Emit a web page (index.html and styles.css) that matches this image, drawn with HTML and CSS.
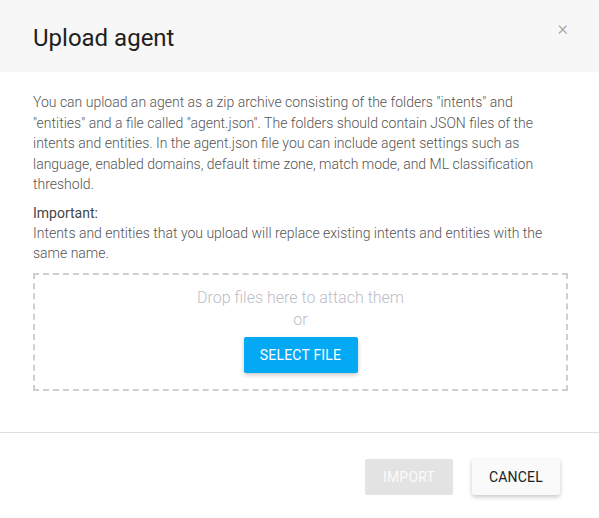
FILE: index.html
```html
<html lang="en">
<head>
  <link rel="stylesheet" href="styles.css">
</head>
<body>
  <div class="dialogo">
    <div class="cabecera">
      <h1 class="titulo">Upload agent</h1>
      <span class="cerrar">&#215;</span>
    </div>
    <div class="cuerpo">
      <p class="texto">You can upload an agent as a zip archive consisting of the folders "intents" and "entities" and a file called "agent.json". The folders should contain JSON files of the intents and entities. In the agent.json file you can include agent settings such as language, enabled domains, default time zone, match mode, and ML classification threshold.</p>
      <div class="importante">Important:</div>
      <p class="texto">Intents and entities that you upload will replace existing intents and entities with the same name.</p>
      <div class="zona">
        <div class="zona-texto">Drop files here to attach them</div>
        <div class="zona-texto">or</div>
        <button class="boton azul">Select file</button>
      </div>
    </div>
    <div class="pie">
      <button class="boton apagado">Import</button>
      <button class="boton claro">Cancel</button>
    </div>
  </div>
</body>
</html>
```

FILE: styles.css
```css
body {
    margin: 0;
    background: #fff;
    font-family: Roboto, "Liberation Sans", sans-serif;
}

.dialogo {
    width: 599px;
    height: 518px;
}

.cabecera {
    height: 72px;
    background: #f7f7f7;
    display: flex;
    justify-content: space-between;
    align-items: flex-start;
    padding: 0 31px 0 33px;
    box-sizing: border-box;
}

.titulo {
    margin: 24px 0 0 0;
    font-size: 24px;
    line-height: 28px;
    font-weight: 400;
    color: #212121;
}

.cerrar {
    margin-top: 16px;
    font-size: 20px;
    line-height: 24px;
    font-weight: 300;
    color: #9e9e9e;
}

.cuerpo {
    padding: 20px 31px 41px 33px;
}

.texto {
    margin: 0;
    font-size: 14px;
    line-height: 20.5px;
    font-weight: 300;
    color: #555;
}

.importante {
    margin-top: 8px;
    font-size: 14px;
    line-height: 20px;
    color: #444;
}

.zona {
    margin-top: 9px;
    border: 2px dashed #cfcfcf;
    padding: 12px 0 16px 0;
    display: flex;
    flex-direction: column;
    align-items: center;
}

.zona-texto {
    font-size: 16px;
    line-height: 22px;
    font-weight: 300;
    color: #bdbdc6;
}

.boton {
    font-family: Roboto, "Liberation Sans", sans-serif;
    font-size: 14px;
    text-transform: uppercase;
    height: 36px;
    border: none;
    border-radius: 2px;
    padding: 0 16px;
    letter-spacing: 0.2px;
}

.azul {
    margin-top: 6px;
    width: 114px;
    background: #03a9f4;
    color: #fff;
    box-shadow: 0 2px 4px rgba(0, 0, 0, 0.22);
}

.pie {
    border-top: 1px solid #e0e0e0;
    display: flex;
    justify-content: flex-end;
    gap: 19px;
    padding: 26px 39px 0 0;
}

.apagado {
    width: 88px;
    background: #e3e3e3;
    color: #fafafa;
}

.claro {
    width: 88px;
    background: #fafafa;
    color: #212121;
    box-shadow: 0 2px 4px rgba(0, 0, 0, 0.22);
}
```
